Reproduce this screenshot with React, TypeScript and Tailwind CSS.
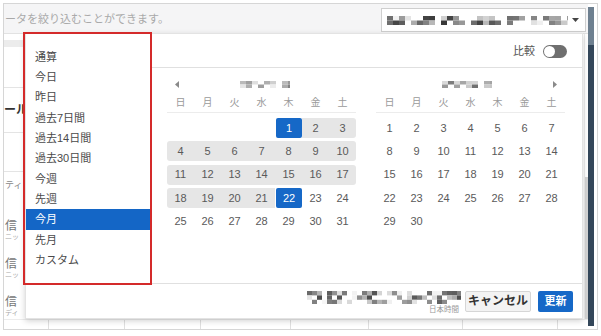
import React from "react";

function rng(seed: number) {
  let s = seed;
  return () => {
    s = (s * 1103515245 + 12345) % 2147483648;
    return s / 2147483648;
  };
}

function Mosaic({
  w,
  h,
  cw,
  ch,
  seed,
  min = 0x50,
  max = 0xf0,
  blank = 0.2,
}: {
  w: number;
  h: number;
  cw: number;
  ch: number;
  seed: number;
  min?: number;
  max?: number;
  blank?: number;
}) {
  const r = rng(seed);
  const cols = Math.ceil(w / cw);
  const rows = Math.ceil(h / ch);
  const rects: React.ReactNode[] = [];
  for (let y = 0; y < rows; y++) {
    for (let x = 0; x < cols; x++) {
      const v = r();
      const g = Math.round(min + (max - min) * r());
      if (v < blank) continue;
      const hex = g.toString(16).padStart(2, "0");
      rects.push(
        <rect key={`${x}-${y}`} x={x * cw} y={y * ch} width={cw} height={ch} fill={`#${hex}${hex}${hex}`} />
      );
    }
  }
  return (
    <svg width={w} height={h} className="block">
      {rects}
    </svg>
  );
}

const WEEK = ["日", "月", "火", "水", "木", "金", "土"];

function Month({
  offset,
  days,
  range,
  side,
  seed,
}: {
  offset: number;
  days: number;
  range?: [number, number];
  side: "left" | "right";
  seed: number;
}) {
  const cells: (number | null)[] = [];
  for (let i = 0; i < offset; i++) cells.push(null);
  for (let d = 1; d <= days; d++) cells.push(d);
  while (cells.length % 7 !== 0) cells.push(null);

  return (
    <div className="w-[189px] flex flex-col">
      <div className="h-[10px] mt-[11px] relative flex items-center">
        {side === "left" ? (
          <>
            <svg width="4" height="7" className="ml-[8px]">
              <polygon points="4,0 4,7 0,3.5" fill="#8a8a8a" />
            </svg>
            <div className="ml-[61px]">
              <Mosaic w={50} h={7} cw={6} ch={3.5} seed={seed} min={0x70} max={0xee} blank={0.3} />
            </div>
          </>
        ) : (
          <>
            <div className="ml-[66px]">
              <Mosaic w={50} h={7} cw={6} ch={3.5} seed={seed} min={0x70} max={0xee} blank={0.3} />
            </div>
            <svg width="4" height="7" className="ml-[61px]">
              <polygon points="0,0 0,7 4,3.5" fill="#8a8a8a" />
            </svg>
          </>
        )}
      </div>
      <div className="grid grid-cols-[repeat(7,27px)] h-[18px] mt-[6px] items-center text-[10px] text-[#9a9a9a] border-b border-[#ececec]">
        {WEEK.map((w) => (
          <div key={w} className="text-center leading-none pb-[1px]">
            {w}
          </div>
        ))}
      </div>
      <div className="grid grid-cols-[repeat(7,27px)] gap-y-[3.3px] mt-[5px] text-[11px]">
        {cells.map((d, i) => {
          const col = i % 7;
          if (d === null) return <div key={i} className="h-[20px]" />;
          const isEdge = range && (d === range[0] || d === range[1]);
          const inRange = range && d > range[0] && d < range[1];
          let cls = "h-[20px] flex items-center justify-center text-[#5a5a5a]";
          if (isEdge) cls = "h-[20px] flex items-center justify-center bg-[#1668c7] text-white rounded-[2px] ml-[1px]";
          else if (inRange) {
            cls = "h-[20px] flex items-center justify-center text-[#5a5a5a] bg-[#e6e6e6]";
            if (col === 0) cls += " rounded-l-[3px]";
            if (col === 6) cls += " rounded-r-[3px]";
          }
          return (
            <div key={i} className={cls}>
              {d}
            </div>
          );
        })}
      </div>
    </div>
  );
}

const PRESETS = ["通算", "今日", "昨日", "過去7日間", "過去14日間", "過去30日間", "今週", "先週", "今月", "先月", "カスタム"];

export default function App() {
  return (
    <div className="w-[601px] h-[336px] bg-white relative overflow-hidden font-[family-name:Liberation_Sans,Noto_Sans_CJK_JP,sans-serif]">
      <div className="absolute left-[3px] top-[3px] w-[595px] h-[327px] border border-[#d6d6d6] flex flex-row overflow-hidden">
        {/* main column */}
        <div className="w-[584px] h-full flex flex-col relative">
          {/* top search row */}
          <div className="h-[30px] bg-[#f5f5f6] border-b border-[#e2e2e2] flex items-start justify-between">
            <div className="text-[11px] text-[#a9a9a9] leading-none mt-[10px] ml-[1px] whitespace-nowrap">
              ータを絞り込むことができます。
            </div>
            <div className="w-[205px] h-[24px] mt-[4px] mr-[2px] bg-white border border-[#cfcfcf] flex items-center pl-[5px] pr-[4px]">
              <Mosaic w={181} h={9} cw={6} ch={4.5} seed={7} min={0x38} max={0xf4} blank={0.3} />
              <svg width="7" height="4" className="ml-[4px]">
                <polygon points="0,0 7,0 3.5,4" fill="#444" />
              </svg>
            </div>
          </div>
          {/* middle background area */}
          <div className="flex-1 flex flex-row">
            <div className="w-[21px] flex flex-col">
              <div className="h-[7px] mt-[6px] bg-[#ececec]" />
              <div className="h-[41px] border-b border-[#e4e4e4]" />
              <div className="h-[45px] border-b border-[#e4e4e4] pt-[15px]">
                <div className="text-[12px] font-bold text-[#333] leading-[14px] whitespace-nowrap">ール</div>
              </div>
              <div className="h-[39px] border-b border-[#e4e4e4]" />
              <div className="pt-[8px] text-[9px] text-[#888] leading-[11px] whitespace-nowrap pl-[1px]">ティ</div>
              <div className="mt-[29px] pl-[1px] text-[12px] text-[#777] leading-[12px]">信</div>
              <div className="pl-[1px] text-[7px] text-[#aaa] leading-[9px] whitespace-nowrap">ニッ</div>
              <div className="mt-[17px] pl-[1px] text-[12px] text-[#777] leading-[12px]">信</div>
              <div className="pl-[1px] text-[7px] text-[#aaa] leading-[9px] whitespace-nowrap">ニッ</div>
              <div className="mt-[17px] pl-[1px] text-[12px] text-[#777] leading-[12px]">信</div>
              <div className="pl-[1px] text-[7px] text-[#aaa] leading-[9px] whitespace-nowrap">ディ</div>
            </div>
            <div className="flex-1" />
            <div className="w-[4px] flex flex-col border-l border-[#ececec]">
              <div className="mt-[143px] flex-1 bg-[#d4d4d4]" />
            </div>
          </div>
          {/* bottom table strip */}
          <div className="h-[10px] flex flex-row border-t border-[#ececec]">
            <div className="w-[44px]" />
            <div className="w-[76px] border-l border-[#e0e0e0]" />
            <div className="w-[76px] border-l border-[#e0e0e0]" />
            <div className="w-[90px] border-l border-[#e0e0e0]" />
            <div className="w-[78px] border-l border-[#e0e0e0]" />
            <div className="w-[94px] border-l border-[#e0e0e0]" />
            <div className="w-[95px] border-l border-[#e0e0e0]" />
            <div className="flex-1 border-l border-[#e0e0e0]" />
          </div>

          {/* popup */}
          <div className="absolute left-[21px] top-[29px] w-[558px] h-[286px] bg-white border border-[#e3e3e3] shadow-[0_2px_6px_rgba(0,0,0,0.18)] flex flex-col">
            <div className="h-[249px] flex flex-row">
              <div className="w-[124px] flex flex-col pt-[13px]">
                {PRESETS.map((p) => (
                  <div
                    key={p}
                    className={
                      p === "今月"
                        ? "h-[20.3px] flex items-center pl-[9px] text-[11px] bg-[#1466c6] text-white"
                        : "h-[20.3px] flex items-center pl-[9px] text-[11px] text-[#4a4a4a]"
                    }
                  >
                    {p}
                  </div>
                ))}
              </div>
              <div className="flex-1 flex flex-col border-l border-[#e6e6e6]">
                <div className="h-[34px] border-b border-[#e0e0e0] flex items-center justify-end pr-[15px] gap-[8px]">
                  <span className="text-[11px] text-[#555] mt-[1px]">比較</span>
                  <div className="w-[24px] h-[13px] rounded-full bg-[#6f6f6f] flex items-center pl-[1px] mt-[1px]">
                    <div className="w-[11px] h-[11px] rounded-full bg-white" />
                  </div>
                </div>
                <div className="flex flex-row pl-[16px] gap-[20px]">
                  <Month offset={4} days={31} range={[1, 22]} side="left" seed={21} />
                  <Month offset={0} days={30} side="right" seed={33} />
                </div>
              </div>
            </div>
            <div className="flex-1 border-t border-[#e0e0e0] flex items-center justify-end pr-[9px]">
              <div className="flex flex-col items-end mt-[2px]">
                <Mosaic w={154} h={13} cw={5} ch={4.4} seed={99} min={0x48} max={0xf6} blank={0.35} />
                <div className="text-[7.5px] leading-[9px] text-[#999] mt-[1px] mr-[2px]">日本時間</div>
              </div>
              <button className="ml-[4px] w-[66px] h-[21px] border border-[#d6d6d6] bg-[#f3f3f3] rounded-[2px] text-[12px] font-bold text-[#333] flex items-center justify-center">
                キャンセル
              </button>
              <button className="ml-[7px] w-[35px] h-[21px] bg-[#1668c7] rounded-[2px] text-[11px] font-bold text-white flex items-center justify-center">
                更新
              </button>
            </div>
          </div>
        </div>
        {/* dark bar */}
        <div className="w-[6px] ml-[0px] mt-[3px] mb-[3px] flex flex-col">
          <div className="h-[38px] bg-[#6e8090]" />
          <div className="flex-1 bg-[#34475a]" />
        </div>
      </div>
      {/* red annotation box */}
      <div className="absolute left-[23px] top-[32px] w-[129px] h-[253px] border-2 border-[#d42a2a]" />
    </div>
  );
}
